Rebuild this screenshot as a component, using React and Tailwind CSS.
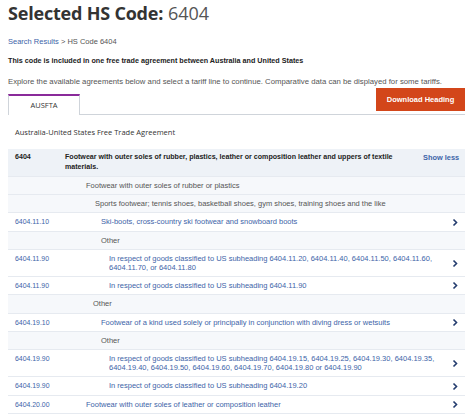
import React from 'react';

const rows = [
  { text: 'Footwear with outer soles of rubber or plastics', pad: 'pl-[21px]' },
  { text: 'Sports footwear; tennis shoes, basketball shoes, gym shoes, training shoes and the like', pad: 'pl-[30px]' },
  { code: '6404.11.10', text: 'Ski-boots, cross-country ski footwear and snowboard boots', pad: 'pl-[36px]' },
  { text: 'Other', pad: 'pl-[36px]' },
  { code: '6404.11.90', text: 'In respect of goods classified to US subheading 6404.11.20, 6404.11.40, 6404.11.50, 6404.11.60, 6404.11.70, or 6404.11.80', pad: 'pl-[44px]' },
  { code: '6404.11.90', text: 'In respect of goods classified to US subheading 6404.11.90', pad: 'pl-[44px]' },
  { text: 'Other', pad: 'pl-[28px]' },
  { code: '6404.19.10', text: 'Footwear of a kind used solely or principally in conjunction with diving dress or wetsuits', pad: 'pl-[36px]' },
  { text: 'Other', pad: 'pl-[36px]' },
  { code: '6404.19.90', text: 'In respect of goods classified to US subheading 6404.19.15, 6404.19.25, 6404.19.30, 6404.19.35, 6404.19.40, 6404.19.50, 6404.19.60, 6404.19.70, 6404.19.80 or 6404.19.90', pad: 'pl-[44px]' },
  { code: '6404.19.90', text: 'In respect of goods classified to US subheading 6404.19.20', pad: 'pl-[44px]' },
  { code: '6404.20.00', text: 'Footwear with outer soles of leather or composition leather', pad: 'pl-[21px]' },
];

function Chevron() {
  return (
    <svg width="8" height="9" viewBox="0 0 8 9" className="shrink-0">
      <path d="M2.5 1.5 L5.5 4.5 L2.5 7.5" fill="none" stroke="#233c6e" strokeWidth="1.6" />
    </svg>
  );
}

function Row({ row }) {
  const link = !!row.code;
  return (
    <div className={`flex border-b border-[#e6eaf0] py-[4px] leading-[9.2px] ${link ? 'bg-white' : 'bg-[#f6f8fb]'}`}>
      <div className="w-[57px] shrink-0 pl-[7px] text-[6.9px] text-[#3d64a8]">{row.code}</div>
      <div className={`flex-1 ${row.pad} pr-[12px] ${link ? 'text-[#3d64a8]' : 'text-[#555]'}`}>{row.text}</div>
      <div className="w-[14px] shrink-0 flex items-center">{link && <Chevron />}</div>
    </div>
  );
}

export default function App() {
  return (
    <div className="w-[474px] h-[417px] overflow-hidden bg-white px-[8px] text-[#222]" style={{ fontFamily: '"Liberation Sans", Arial, sans-serif' }}>
      <h1 className="pt-[1px] text-[18px] leading-[24px] text-[#333]" style={{ fontFamily: '"Open Sans", sans-serif' }}>
        <span className="font-bold tracking-[-0.2px]">Selected HS Code:</span>{' '}
        <span className="font-normal text-[#555]">6404</span>
      </h1>
      <div className="mt-[12px] text-[7.5px] leading-[10px] text-[#555]">
        <span className="text-[#3d64a8]">Search Results</span> &gt; HS Code 6404
      </div>
      <p className="mt-[9px] text-[7.2px] leading-[10px] font-bold text-[#222]">
        This code is included in one free trade agreement between Australia and United States
      </p>
      <p className="mt-[11px] text-[7.75px] leading-[10px] text-[#555]">
        Explore the available agreements below and select a tariff line to continue. Comparative data can be displayed for some tariffs.
      </p>
      <div className="mt-[1px] flex items-end border-b border-[#cfd4da] mr-[1px]">
        <div className="w-[72px] h-[21px] border-t-2 border-t-[#8a2a9a] border-x border-x-[#cfd4da] -mb-px bg-white flex items-center justify-center text-[7.5px] text-[#333]" style={{ fontFamily: '"Open Sans", sans-serif' }}>
          AUSFTA
        </div>
        <div className="flex-1" />
        <button className="mb-[3px] w-[89px] h-[23px] bg-[#d3461a] text-white text-[7.5px] font-bold">
          Download Heading
        </button>
      </div>
      <div className="mt-[12px] pl-[7px] text-[7.5px] leading-[10px] text-[#333]" style={{ fontFamily: '"Open Sans", sans-serif' }}>
        Australia-United States Free Trade Agreement
      </div>
      <div className="mt-[12px] mr-[1px] text-[7.5px]">
        <div className="flex bg-[#eef2f7] border-b border-[#e6eaf0] py-[4px] leading-[9.5px] font-bold text-[7.1px]">
          <div className="w-[57px] shrink-0 pl-[7px] text-[#222]">6404</div>
          <div className="flex-1 text-[#222] pr-[26px]">
            Footwear with outer soles of rubber, plastics, leather or composition leather and uppers of textile materials.
          </div>
          <div className="w-[42px] shrink-0 text-[#3d64a8] text-[7.4px]">Show less</div>
        </div>
        {rows.map((r, i) => (
          <Row key={i} row={r} />
        ))}
      </div>
    </div>
  );
}
